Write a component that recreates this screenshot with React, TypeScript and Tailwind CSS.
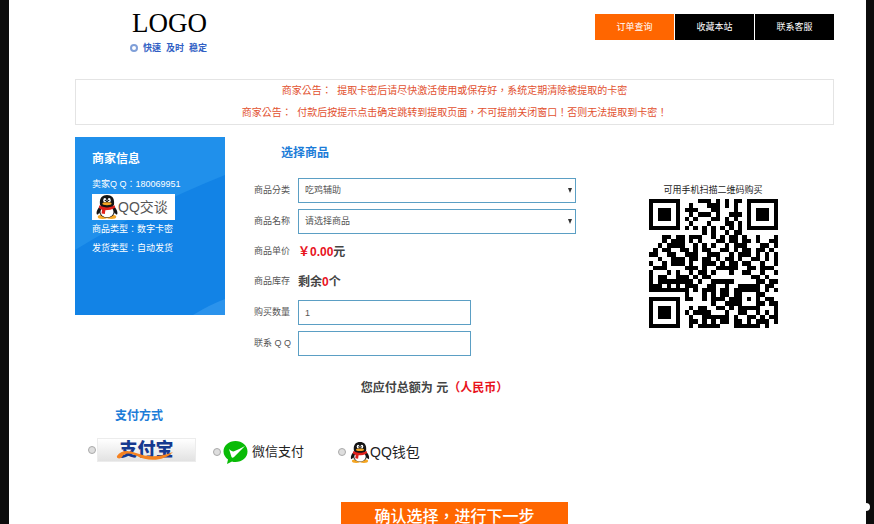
import React, { useState } from "react";

const navLinks = [
  { title: "订单查询", className: "bg-[#ff6600]" },
  { title: "收藏本站", className: "bg-black" },
  { title: "联系客服", className: "bg-black" },
];

const qrRows = [
  "11111110000111010101101111111",
  "10000010010001110101001000001",
  "10111010111000110001001011101",
  "10111010010111010011101011101",
  "10111010101000110101001011101",
  "10000010010001000110101000001",
  "11111110101010101010101111111",
  "00000000000010100101100000000",
  "00011011011100101011010010001",
  "00010111010100011011011010011",
  "00101111001010100101110001101",
  "01011001101011001101011011010",
  "11001100111001110010111010101",
  "00100111011011010110100110101",
  "10010111010011101011011001001",
  "01110000111010011111001101110",
  "10001010010110100010011001001",
  "10110011101011000000000110100",
  "10111111110100111110000011011",
  "11101010111001100100111110110",
  "11111111101011101101111110101",
  "00000000100010101101100011000",
  "11111110110010111011101010110",
  "10000010000000100111100011011",
  "10111010010110011010111110001",
  "10111010101111000100110010101",
  "10111010010011111101001101011",
  "10000010011010101101101011101",
  "11111110010111110001111110100",
];

const QrCode = () => (
  <svg
    viewBox="0 0 29 29"
    className="w-[129px] h-[129px]"
    shapeRendering="crispEdges"
    role="img"
  >
    {qrRows.map((row, y) =>
      row
        .split("")
        .map((cell, x) =>
          cell === "1" ? (
            <rect key={`${x}-${y}`} x={x} y={y} width="1" height="1" />
          ) : null
        )
    )}
  </svg>
);

const Penguin = ({ className }: { className: string }) => (
  <svg viewBox="0 0 40 44" className={className}>
    <path
      d="M8 20C3 24 0 30 1 35c1 2 3 0 6-4zM32 20c5 4 8 10 7 15-1 2-3 0-6-4z"
      fill="#151515"
    />
    <ellipse cx="12" cy="40" rx="9" ry="4" fill="#f5a623" />
    <ellipse cx="28" cy="40" rx="9" ry="4" fill="#f5a623" />
    <ellipse cx="20" cy="29" rx="15" ry="12.5" fill="#151515" />
    <ellipse cx="20" cy="31" rx="12" ry="10" fill="#fff" />
    <path d="M7 16C6 5 12 0 20 0s14 5 13 16c0 5-5 8-13 8S7 21 7 16z" fill="#151515" />
    <ellipse cx="16" cy="9.5" rx="2.8" ry="4" fill="#fff" />
    <ellipse cx="24" cy="9.5" rx="2.8" ry="4" fill="#fff" />
    <circle cx="17" cy="10" r="1.3" fill="#151515" />
    <circle cx="23" cy="10" r="1.3" fill="#151515" />
    <ellipse cx="20" cy="16" rx="8.5" ry="2.6" fill="#f5a623" />
    <path
      d="M6 19c8 5 20 5 28 0l1 4c-5 4-12 5-18 5l-1 7-6-1 1-7c-3-1-5-2-6-4z"
      fill="#e0211b"
    />
  </svg>
);

const WechatPay = () => (
  <svg viewBox="0 0 50 50" className="w-[25px] h-[25px]">
    <path
      d="M25 2C12 2 1 11 1 23c0 7 4 12 9 16l-2 9 10-5c2 1 4 1 7 1 13 0 24-9 24-21S38 2 25 2z"
      fill="#09bb07"
    />
    <path d="M12 18c3 3 6 5 9 5 8-3 15-7 23-11L22 34c-2 2-4 2-5 0z" fill="#fff" />
  </svg>
);

const fieldClass =
  "h-[25px] border border-[#5b9fc4] bg-white px-[6px] text-[9px] text-[#555]";

const Field = ({
  label,
  htmlFor,
  children,
}: {
  label: string;
  htmlFor?: string;
  children: React.ReactNode;
}) => (
  <div className="flex items-center min-h-6">
    {htmlFor ? (
      <label htmlFor={htmlFor} className="w-11 shrink-0 text-[9px] text-[#555]">
        {label}
      </label>
    ) : (
      <span className="w-11 shrink-0 text-[9px] text-[#555]">{label}</span>
    )}
    {children}
  </div>
);

const Dropdown = ({ id, option }: { id: string; option: string }) => (
  <div className="relative flex-1">
    <select id={id} className={`${fieldClass} block w-full appearance-none`}>
      <option>{option}</option>
    </select>
    <svg
      viewBox="0 0 4 5"
      className="absolute right-1 top-[10px] w-1 h-[5px] pointer-events-none"
    >
      <path d="M0 0h4L2 5z" fill="#333" />
    </svg>
  </div>
);

const App = () => {
  const [count, setCount] = useState("1");
  const [contact, setContact] = useState("");
  const [payment, setPayment] = useState("");

  const radio = (value: string) => (
    <input
      id={value}
      type="radio"
      name="payment"
      checked={payment === value}
      onChange={() => setPayment(value)}
      className="size-2 shrink-0 appearance-none rounded-full border border-[#aaa] bg-[#dedede] checked:bg-[#555]"
    />
  );

  return (
    <div className="relative min-h-screen border-l-[9px] border-r-8 border-[#0c0c0c] bg-white pl-[66px] pr-8 font-['Liberation_Sans','Noto_Sans_CJK_TC',sans-serif] text-[#444]">
      <div className="absolute -right-1 top-[503px] size-2 rounded-full bg-white" />

      <header className="flex items-start justify-between pt-[14px]">
        <div className="ml-[55px] h-[65px]">
          <h1 className="font-['Liberation_Serif',serif] text-[27px] leading-[18px] px-[2px] text-black">
            LOGO
          </h1>
          <p className="mt-[10px] flex items-center gap-[5px] text-[9px] leading-3 font-bold text-[#3160c4]">
            <span className="size-2 rounded-full border-2 border-[#7f9fd8]" />
            <span>快速</span>
            <span>及时</span>
            <span>稳定</span>
          </p>
        </div>
        <nav className="flex gap-px">
          {navLinks.map((link) => (
            <a
              key={link.title}
              href="#"
              className={`${link.className} w-[79px] text-center text-[9px] leading-[26px] text-white`}
            >
              {link.title}
            </a>
          ))}
        </nav>
      </header>

      <div className="border border-[#e4e4e4] text-center text-[10px] leading-[22px] text-[#e2512f]">
        <p>商家公告：&nbsp; 提取卡密后请尽快激活使用或保存好，系统定期清除被提取的卡密</p>
        <p>商家公告：&nbsp; 付款后按提示点击确定跳转到提取页面，不可提前关闭窗口！否则无法提取到卡密！</p>
      </div>

      <main>
        <div className="mt-3 flex items-start">
          <aside className="relative h-[178px] w-[150px] shrink-0 bg-[#1283e6] text-[9px] leading-[19px] text-white">
            <svg
              viewBox="0 0 150 178"
              preserveAspectRatio="none"
              className="absolute inset-0 size-full"
            >
              <path d="M0 0H150V38Q70 70 0 113z" fill="#2090eb" />
              <path d="M118 178Q134 168 150 162V178z" fill="#2b93ec" />
            </svg>
            <div className="relative px-[17px] pt-3">
              <h2 className="text-xs leading-5 font-bold">商家信息</h2>
              <p className="mt-[6px]">卖家Q Q：180069951</p>
              <a
                href="#"
                className="flex h-[26px] w-[83px] items-center whitespace-nowrap bg-white pl-1 text-sm text-[#555]"
              >
                <Penguin className="w-[22px] h-6 shrink-0" />
                QQ交谈
              </a>
              <p>商品类型：数字卡密</p>
              <p>发货类型：自动发货</p>
            </div>
          </aside>

          <section className="ml-[29px] w-[322px]">
            <h2 className="ml-[27px] pt-[6px] text-xs leading-5 font-bold text-[#1c7cd8]">
              选择商品
            </h2>
            <div className="mt-[15px] flex flex-col gap-[6px]">
              <Field label="商品分类" htmlFor="category">
                <Dropdown id="category" option="吃鸡辅助" />
              </Field>
              <Field label="商品名称" htmlFor="goods">
                <Dropdown id="goods" option="请选择商品" />
              </Field>
              <Field label="商品单价">
                <strong className="text-xs leading-6">
                  <span className="text-[#e8121c]">￥0.00</span>元
                </strong>
              </Field>
              <Field label="商品库存">
                <strong className="text-xs leading-6">
                  剩余<span className="text-[#e8121c]">0</span>个
                </strong>
              </Field>
              <Field label="购买数量" htmlFor="count">
                <input
                  id="count"
                  type="text"
                  value={count}
                  onChange={(e) => setCount(e.target.value)}
                  className={`${fieldClass} w-[173px]`}
                />
              </Field>
              <Field label="联系 Q Q" htmlFor="contact">
                <input
                  id="contact"
                  type="text"
                  value={contact}
                  onChange={(e) => setContact(e.target.value)}
                  className={`${fieldClass} w-[173px]`}
                />
              </Field>
            </div>
          </section>

          <section className="flex flex-1 flex-col items-center pl-4 pt-11">
            <p className="text-[9px] leading-[18px] text-[#222]">可用手机扫描二维码购买</p>
            <QrCode />
          </section>
        </div>

        <p className="mt-[22px] pr-10 text-center text-xs leading-5 font-bold">
          您应付总额为 元<span className="text-[#e8121c]">（人民币）</span>
        </p>

        <h2 className="ml-10 mt-2 text-xs leading-5 font-bold text-[#1c7cd8]">
          支付方式
        </h2>
        <div className="ml-[13px] mt-3 flex h-7 items-start gap-[17px] text-[#222]">
          <div className="flex items-center gap-px">
            {radio("alipay")}
            <label
              htmlFor="alipay"
              className="relative flex h-6 w-[99px] items-center justify-center border border-[#ececec] bg-linear-to-b from-white to-[#e2e2e2] text-lg leading-5 font-black text-[#16398f]"
            >
              支付宝
              <svg viewBox="0 0 60 22" className="absolute left-[18px] top-0 w-[60px] h-[22px]">
                <path
                  d="M1 17C5 11 12 11 20 14c11 4 22 5 37-1-8 9-25 10-36 4-8-4-13-3-15 1-1 2-6 2-5-1z"
                  fill="#f58220"
                />
              </svg>
            </label>
          </div>
          <div className="flex h-7 items-center gap-[2px]">
            {radio("wechat")}
            <label htmlFor="wechat" className="flex items-center gap-1 text-[13px]">
              <WechatPay />
              微信支付
            </label>
          </div>
          <div className="ml-[17px] flex h-7 items-center gap-1">
            {radio("qq")}
            <label htmlFor="qq" className="flex items-center text-sm">
              <Penguin className="w-5 h-[21px]" />
              QQ钱包
            </label>
          </div>
        </div>

        <button
          type="button"
          className="mx-auto mt-9 block w-[227px] bg-[#ff6600] text-base leading-[30px] font-medium text-white"
        >
          确认选择，进行下一步
        </button>
      </main>
    </div>
  );
};

export default App;
